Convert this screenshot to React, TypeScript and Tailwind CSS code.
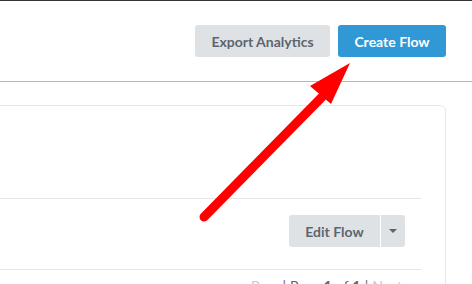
import React from "react";

export default function App() {
  return (
    <div
      className="relative w-[472px] h-[284px] overflow-hidden bg-white border-t border-[#2f3438]"
      style={{ fontFamily: "Lato, 'Open Sans', sans-serif" }}
    >
      <div className="flex h-[81px] items-center justify-end gap-[8px] border-b border-[#b3b8bf] pr-[26px]">
        <button className="h-[32px] w-[135px] rounded-[3px] bg-[#dfe2e5] text-[14px] font-bold text-[#5b6670]">
          Export Analytics
        </button>
        <button className="h-[32px] w-[108px] rounded-[3px] bg-[#2f98d5] text-[14px] font-bold text-white">
          Create Flow
        </button>
      </div>
      <div className="pt-[23px]">
        <div className="ml-[-20px] mr-[26px] rounded-tr-[6px] border border-[#e7e7e7] pr-[24px]">
          <div className="h-[92px]" />
          <div className="flex h-[72px] justify-end border-y border-[#e6e6e6] pr-[16px] pt-[16px]">
            <div className="flex h-[32px] overflow-hidden rounded-[3px]">
              <button className="w-[91px] bg-[#dfe2e5] text-[14px] font-bold text-[#5b6670]">
                Edit Flow
              </button>
              <div className="w-[1px] bg-white" />
              <button className="flex w-[24px] items-center justify-center bg-[#dfe2e5]">
                <span className="block h-0 w-0 border-x-[4px] border-t-[4px] border-x-transparent border-t-[#5b6670]" />
              </button>
            </div>
          </div>
          <div className="flex justify-end gap-[4px] pr-[19px] pt-[6px] text-[14px] leading-[20px] text-[#5b6670]">
            <span className="text-[#c4c9ce]">Prev</span>
            <span>|</span>
            <span>Page</span>
            <span className="font-bold">1</span>
            <span>of</span>
            <span className="font-bold">1</span>
            <span>|</span>
            <span className="text-[#c4c9ce]">Next</span>
          </div>
          <div className="h-[40px]" />
        </div>
      </div>
      <svg className="pointer-events-none absolute left-0 top-0" width="472" height="284" viewBox="0 0 472 284">
        <line x1="204" y1="216" x2="322" y2="96" stroke="#ff0000" strokeWidth="9" strokeLinecap="round" />
        <polygon points="350,62 310,85 331,103" fill="#ff0000" />
      </svg>
    </div>
  );
}
